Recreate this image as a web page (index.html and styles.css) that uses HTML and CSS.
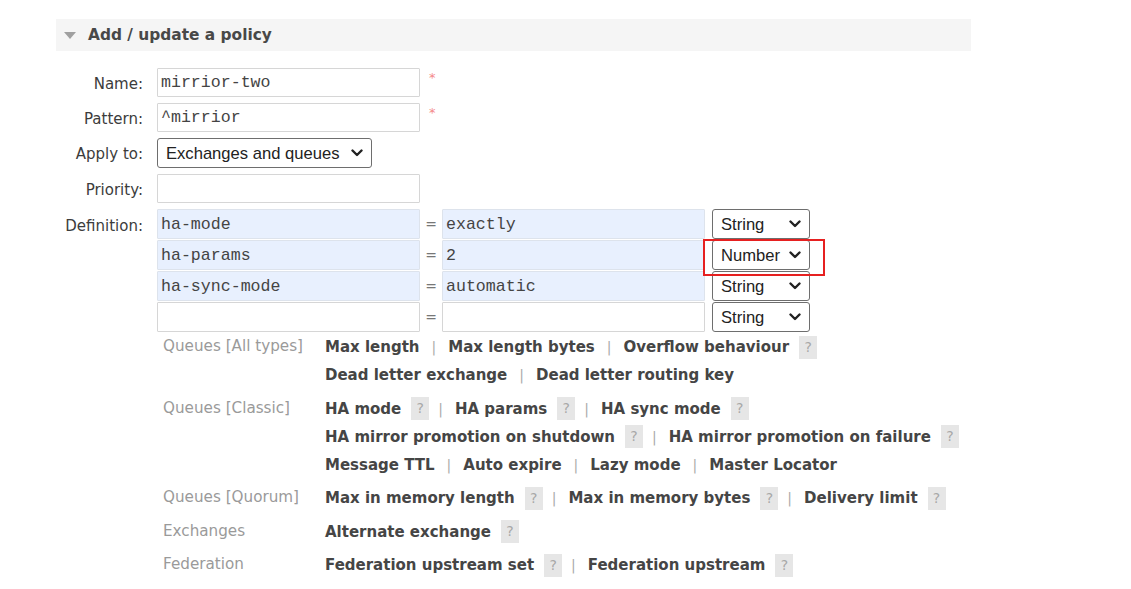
FILE: index.html
```html
<!DOCTYPE html>
<html>
<head>
<meta charset="utf-8">
<link rel="stylesheet" href="styles.css">
</head>
<body>
<div class="page">
  <section class="panel">
    <h2 class="panel-head"><span class="tri"></span>Add / update a policy</h2>
    <div class="form">
      <label class="lbl">Name:</label>
      <div class="field"><input class="text mono" value="mirrior-two"><span class="req">*</span></div>

      <label class="lbl">Pattern:</label>
      <div class="field"><input class="text mono" value="^mirrior"><span class="req">*</span></div>

      <label class="lbl">Apply to:</label>
      <div class="field"><select class="sel apply"><option>Exchanges and queues</option></select></div>

      <label class="lbl">Priority:</label>
      <div class="field"><input class="text mono" value=""></div>

      <label class="lbl lbl-def">Definition:</label>
      <div class="defs">
        <div class="def-row">
          <input class="text mono filled" value="ha-mode"><span class="eq">=</span><input class="text mono filled" value="exactly"><select class="sel type"><option>String</option></select>
        </div>
        <div class="def-row">
          <input class="text mono filled" value="ha-params"><span class="eq">=</span><input class="text mono filled" value="2"><span class="hl"><select class="sel type"><option>Number</option></select></span>
        </div>
        <div class="def-row">
          <input class="text mono filled" value="ha-sync-mode"><span class="eq">=</span><input class="text mono filled" value="automatic"><select class="sel type"><option>String</option></select>
        </div>
        <div class="def-row">
          <input class="text mono" value=""><span class="eq">=</span><input class="text mono" value=""><select class="sel type"><option>String</option></select>
        </div>

        <div class="keys">
          <div class="group">
            <div class="gname">Queues [All types]</div>
            <div class="glinks">
              <div class="line"><b>Max length</b><span class="sep">|</span><b>Max length bytes</b><span class="sep">|</span><b>Overflow behaviour</b><span class="help">?</span></div>
              <div class="line"><b>Dead letter exchange</b><span class="sep">|</span><b>Dead letter routing key</b></div>
            </div>
          </div>
          <div class="group">
            <div class="gname">Queues [Classic]</div>
            <div class="glinks">
              <div class="line"><b>HA mode</b><span class="help">?</span><span class="sep">|</span><b>HA params</b><span class="help">?</span><span class="sep">|</span><b>HA sync mode</b><span class="help">?</span></div>
              <div class="line"><b>HA mirror promotion on shutdown</b><span class="help">?</span><span class="sep">|</span><b>HA mirror promotion on failure</b><span class="help">?</span></div>
              <div class="line"><b>Message TTL</b><span class="sep">|</span><b>Auto expire</b><span class="sep">|</span><b>Lazy mode</b><span class="sep">|</span><b>Master Locator</b></div>
            </div>
          </div>
          <div class="group">
            <div class="gname">Queues [Quorum]</div>
            <div class="glinks">
              <div class="line"><b>Max in memory length</b><span class="help">?</span><span class="sep">|</span><b>Max in memory bytes</b><span class="help">?</span><span class="sep">|</span><b>Delivery limit</b><span class="help">?</span></div>
            </div>
          </div>
          <div class="group">
            <div class="gname">Exchanges</div>
            <div class="glinks">
              <div class="line"><b>Alternate exchange</b><span class="help">?</span></div>
            </div>
          </div>
          <div class="group">
            <div class="gname">Federation</div>
            <div class="glinks">
              <div class="line"><b>Federation upstream set</b><span class="help">?</span><span class="sep">|</span><b>Federation upstream</b><span class="help">?</span></div>
            </div>
          </div>
        </div>
      </div>
    </div>
  </section>
</div>
</body>
</html>
```

FILE: styles.css
```css
* { box-sizing: border-box; }
html, body { margin: 0; padding: 0; background: #fff; }
body {
  font-family: "DejaVu Sans", Verdana, sans-serif;
  font-size: 15px;
  color: #444;
}
.page { padding: 19px 0 0 56px; }
.panel { width: 915px; }
.panel-head {
  margin: 0;
  height: 32px;
  background: #f5f5f5;
  display: flex;
  align-items: center;
  font-size: 15.4px;
  font-weight: bold;
  color: #484848;
  padding-left: 8px;
}
.tri {
  width: 0; height: 0;
  border-left: 6px solid transparent;
  border-right: 6px solid transparent;
  border-top: 7px solid #a0a0a0;
  margin-right: 12px;
  margin-top: 1px;
}
.form {
  margin-top: 17px;
  display: grid;
  grid-template-columns: 87px 1fr;
  column-gap: 14px;
  row-gap: 6px;
  align-items: start;
}
.lbl {
  text-align: right;
  color: #3c3c3c;
  line-height: 29px;
  height: 29px;
  padding-top: 2px;
}
.lbl-def { padding-top: 3px; }
.field { display: flex; align-items: flex-start; }
.text {
  width: 263px;
  height: 29px;
  border: 1.5px solid #d6d6d6;
  border-radius: 1px;
  background: #fff;
  padding: 0 3px;
  margin: 0;
  outline: none;
}
.mono {
  font-family: "Liberation Mono", "Courier New", monospace;
  font-size: 16.6px;
  color: #444;
}
.filled { background: #e8f0fe; border-color: #dde3ec; }
.req {
  color: #f48a8a;
  font-size: 13px;
  margin-left: 9px;
  margin-top: 2px;
  line-height: 16px;
}
.sel {
  -webkit-appearance: none;
  appearance: none;
  font-family: "Liberation Sans", Arial, sans-serif;
  font-size: 16.6px;
  color: #222;
  height: 30px;
  border: 1px solid #6e6e6e;
  border-radius: 3px;
  background-color: #fff;
  background-image: url("data:image/svg+xml;utf8,<svg xmlns='http://www.w3.org/2000/svg' width='12' height='8' viewBox='0 0 12 8'><path d='M1.5 1.5 L6 6 L10.5 1.5' fill='none' stroke='%23222' stroke-width='2.4' stroke-linecap='round' stroke-linejoin='round'/></svg>");
  background-repeat: no-repeat;
  background-position: right 8px center;
  background-size: 12px 8px;
  padding: 0 24px 0 8px;
  margin: 0;
}
.apply { width: 215px; }
.defs { display: flex; flex-direction: column; }
.def-row {
  display: flex;
  align-items: center;
  height: 30px;
  margin-bottom: 1px;
}
.def-row .text { height: 30px; }
.eq {
  width: 22px;
  text-align: center;
  color: #777;
  font-size: 14px;
}
.type { width: 98px; margin-left: 7px; }
.hl {
  position: relative;
  display: inline-flex;
}
.hl::after {
  content: "";
  position: absolute;
  left: -2px; top: -1px;
  width: 118px; height: 33px;
  border: 2px solid #e62020;
}
.keys { margin-top: 0; }
.group {
  display: grid;
  grid-template-columns: 168px 1fr;
  margin-bottom: 5.5px;
}
.gname {
  color: #9a9a9a;
  padding-left: 6px;
  line-height: 26px;
  font-size: 15.2px;
}
.line {
  display: flex;
  align-items: center;
  height: 28px;
}
.line b { color: #454545; font-size: 15px; }
.sep { color: #aaa; margin: 0 12px; font-size: 14px; }
.help {
  display: inline-block;
  width: 18px;
  height: 23px;
  line-height: 23px;
  text-align: center;
  background: #e6e6e6;
  color: #a8a8a8;
  font-size: 14px;
  margin-left: 10px;
  margin-right: -3px;
}
```
